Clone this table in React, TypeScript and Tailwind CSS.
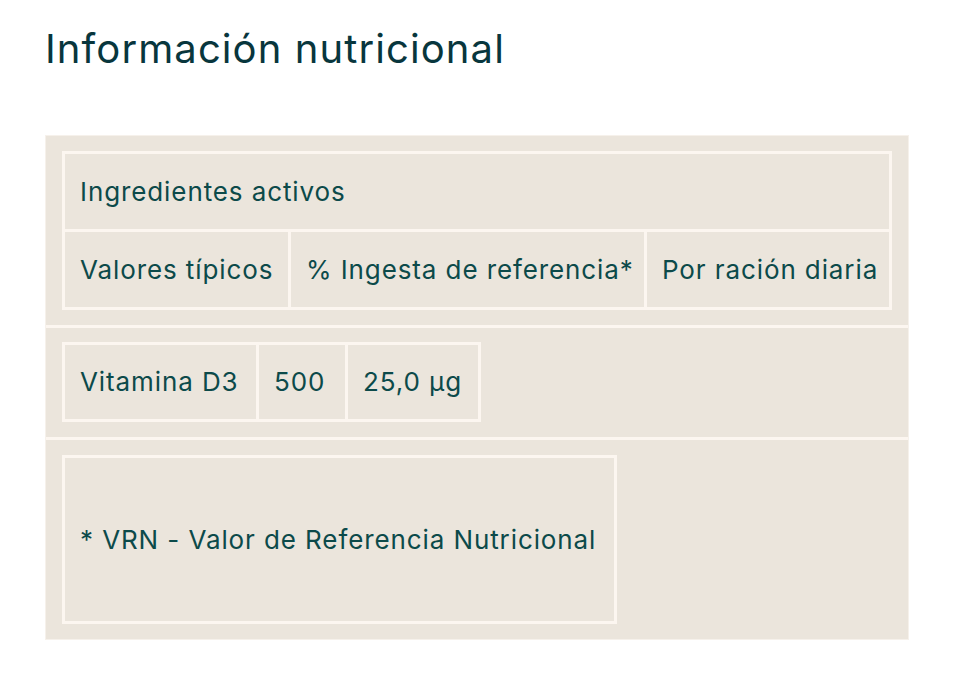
const font = "font-['Inter','Noto_Sans',sans-serif]";

function Cell({ children, className = '' }: { children: React.ReactNode; className?: string }) {
  return (
    <div className={`flex min-w-0 items-center whitespace-nowrap border-[3px] border-[#fcf6f0] px-[15px] text-[26px] leading-[30px] tracking-[0.9px] text-[#0c4a4a] ${className}`}>
      {children}
    </div>
  );
}

export default function App() {
  return (
    <div className={`min-h-[673px] w-[954px] bg-white px-[45px] pt-[25px] ${font}`}>
      <h1 className="text-[40px] leading-[48px] font-normal tracking-[1.1px] text-[#08363d]">
        Información nutricional
      </h1>

      <div className="mt-[62px] w-[864px] border border-[#f6f1eb] bg-[#ebe5dc]">
        {/* Cabecera */}
        <div className="px-[16px] py-[15px]">
          <div className="flex flex-col">
            <Cell className="h-[81px]">Ingredientes activos</Cell>
            <div className="-mt-[3px] flex">
              <Cell className="h-[81px] w-[229px] shrink-0">Valores típicos</Cell>
              <Cell className="-ml-[3px] h-[81px] w-[359px] shrink-0">% Ingesta de referencia*</Cell>
              <Cell className="-ml-[3px] h-[81px] flex-1">Por ración diaria</Cell>
            </div>
          </div>
        </div>

        {/* Cuerpo */}
        <div className="border-t-[3px] border-[#fcf6f0] px-[16px] pt-[14px] pb-[15px]">
          <div className="flex">
            <Cell className="h-[80px] w-[197px]">Vitamina D3</Cell>
            <Cell className="-ml-[3px] h-[80px] w-[92px]">500</Cell>
            <Cell className="-ml-[3px] h-[80px] w-[136px]">25,0 µg</Cell>
          </div>
        </div>

        {/* Pie */}
        <div className="border-t-[3px] border-[#fcf6f0] px-[16px] pt-[15px] pb-[15px]">
          <div className="flex">
            <Cell className="h-[169px] w-[555px]">* VRN - Valor de Referencia Nutricional</Cell>
          </div>
        </div>
      </div>
    </div>
  );
}
